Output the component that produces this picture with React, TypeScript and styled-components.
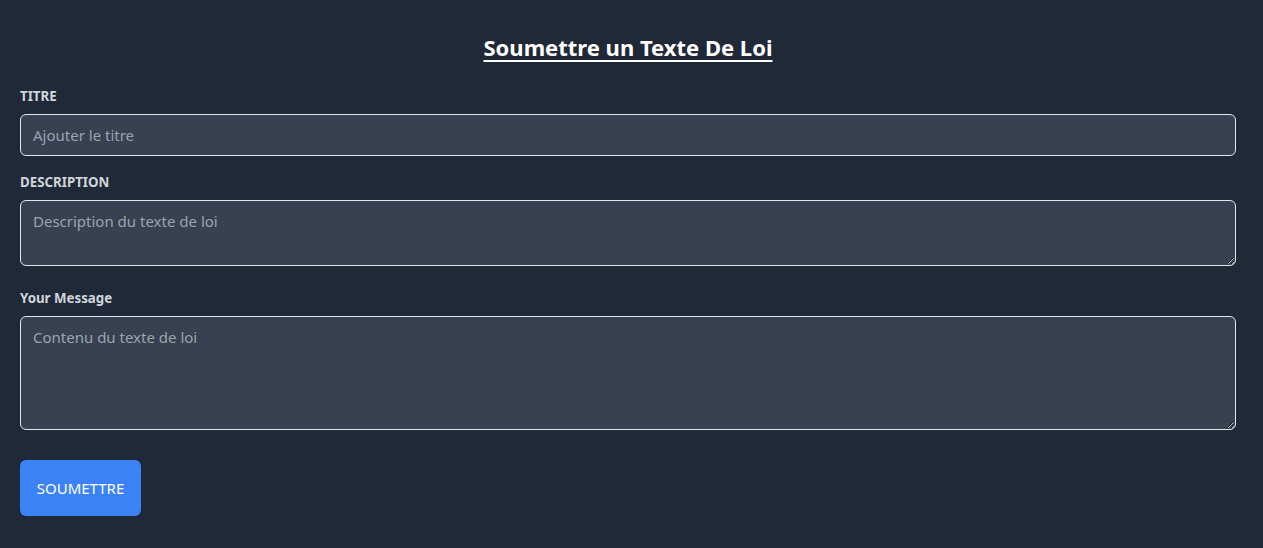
import React from "react";
import styled, { createGlobalStyle } from "styled-components";

const Global = createGlobalStyle`
  html, body { margin: 0; padding: 0; background: #1f2937; }
  body { font-family: "Noto Sans", "Open Sans", sans-serif; }
  * { box-sizing: border-box; }
`;

const Page = styled.div`
  min-height: 548px;
  background: #1f2937;
  padding: 31px 27px 20px 20px;
`;

const Title = styled.h1`
  margin: 0 0 23px;
  text-align: center;
  color: #ffffff;
  font-size: 22px;
  line-height: 32px;
  font-weight: 700;
  text-decoration: underline;
  text-underline-offset: 4px;
  text-decoration-thickness: 2px;
`;

const Form = styled.form`
  display: flex;
  flex-direction: column;
`;

const Label = styled.label<{ $gap?: number }>`
  display: block;
  color: #d1d5db;
  font-size: 13.3px;
  line-height: 20px;
  font-weight: 700;
  margin-bottom: 8px;
  margin-top: ${(p) => p.$gap ?? 0}px;
`;

const fieldCss = `
  display: block;
  width: 100%;
  background: #374151;
  border: 1px solid #e5e7eb;
  border-radius: 6px;
  color: #ffffff;
  font-family: "Noto Sans", "Open Sans", sans-serif;
  font-size: 15px;
  line-height: 24px;
  padding: 8px 12px;
  margin: 0;
  outline: none;
  &::placeholder { color: #9ca3af; }
`;

const Input = styled.input`
  ${fieldCss}
  height: 42px;
`;

const TextArea = styled.textarea<{ $h: number }>`
  ${fieldCss}
  height: ${(p) => p.$h}px;
  resize: vertical;
`;

const Button = styled.button`
  align-self: flex-start;
  margin-top: 30px;
  width: 121px;
  height: 56px;
  padding: 0;
  background: #3b82f6;
  color: #ffffff;
  border: none;
  border-radius: 6px;
  font-family: "Noto Sans", "Open Sans", sans-serif;
  font-size: 15px;
  text-transform: uppercase;
  cursor: pointer;
`;

export default function App() {
  return (
    <Page>
      <Global />
      <Title>Soumettre un Texte De Loi</Title>
      <Form onSubmit={(e) => e.preventDefault()}>
        <Label htmlFor="titre">TITRE</Label>
        <Input id="titre" placeholder="Ajouter le titre" />
        <Label htmlFor="desc" $gap={16}>DESCRIPTION</Label>
        <TextArea id="desc" $h={66} placeholder="Description du texte de loi" />
        <Label htmlFor="msg" $gap={22}>Your Message</Label>
        <TextArea id="msg" $h={114} placeholder="Contenu du texte de loi" />
        <Button type="submit">Soumettre</Button>
      </Form>
    </Page>
  );
}
